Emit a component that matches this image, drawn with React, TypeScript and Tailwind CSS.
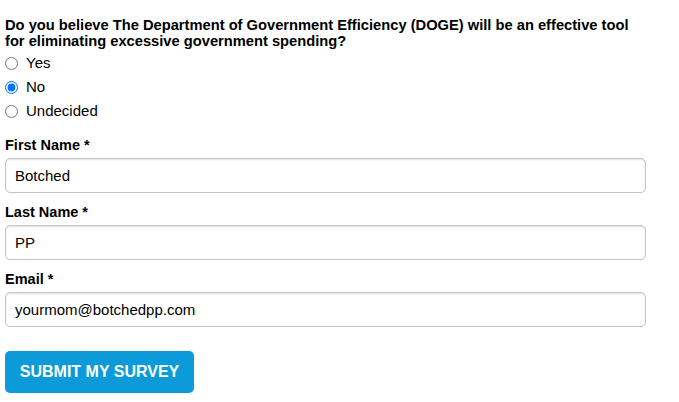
import { useState } from "react";

export default function App() {
  const [answer, setAnswer] = useState("no");
  const [form, setForm] = useState({
    firstName: "Botched",
    lastName: "PP",
    email: "yourmom@botchedpp.com",
  });

  const handleChange = (e: React.ChangeEvent<HTMLInputElement>) => {
    setForm({ ...form, [e.target.name]: e.target.value });
  };

  const options = [
    { value: "yes", label: "Yes" },
    { value: "no", label: "No" },
    { value: "undecided", label: "Undecided" },
  ];

  return (
    <div className="bg-white px-[5px] pt-[17px] text-black font-['Liberation_Sans',Arial,sans-serif] w-[651px]">
      {/* Question */}
      <p className="text-[14.7px] font-bold leading-[16px] w-[642px]">
        Do you believe The Department of Government Efficiency (DOGE) will be
        an effective tool for eliminating excessive government spending?
      </p>
      <div className="flex flex-col mt-[2px]">
        {options.map((o) => (
          <label key={o.value} className="flex items-center h-[24px] text-[15px]">
            <input
              type="radio"
              name="doge"
              value={o.value}
              checked={answer === o.value}
              onChange={() => setAnswer(o.value)}
              className="w-[13px] h-[13px] m-0 mr-[8px] accent-[#0075ff]"
            />
            {o.label}
          </label>
        ))}
      </div>

      {/* First Name */}
      <div className="mt-[12px]">
        <label className="block text-[14.5px] font-bold leading-[20px]">First Name *</label>
        <input
          type="text"
          name="firstName"
          value={form.firstName}
          onChange={handleChange}
          className="mt-[3px] w-[641px] h-[35px] px-[9px] text-[15px] border border-[#c4c4c4] rounded-[5px] shadow-[inset_0_1px_2px_rgba(0,0,0,0.12)] outline-none"
        />
      </div>

      {/* Last Name */}
      <div className="mt-[9px]">
        <label className="block text-[14.5px] font-bold leading-[20px]">Last Name *</label>
        <input
          type="text"
          name="lastName"
          value={form.lastName}
          onChange={handleChange}
          className="mt-[3px] w-[641px] h-[35px] px-[9px] text-[15px] border border-[#c4c4c4] rounded-[5px] shadow-[inset_0_1px_2px_rgba(0,0,0,0.12)] outline-none"
        />
      </div>

      {/* Email */}
      <div className="mt-[9px]">
        <label className="block text-[14.5px] font-bold leading-[20px]">Email *</label>
        <input
          type="email"
          name="email"
          value={form.email}
          onChange={handleChange}
          className="mt-[3px] w-[641px] h-[35px] px-[9px] text-[15px] border border-[#c4c4c4] rounded-[5px] shadow-[inset_0_1px_2px_rgba(0,0,0,0.12)] outline-none"
        />
      </div>

      <button
        type="submit"
        className="mt-[24px] w-[189px] h-[42px] bg-[#0c9ad8] text-white text-[16px] font-bold uppercase rounded-[5px]"
      >
        Submit my survey
      </button>
    </div>
  );
}
